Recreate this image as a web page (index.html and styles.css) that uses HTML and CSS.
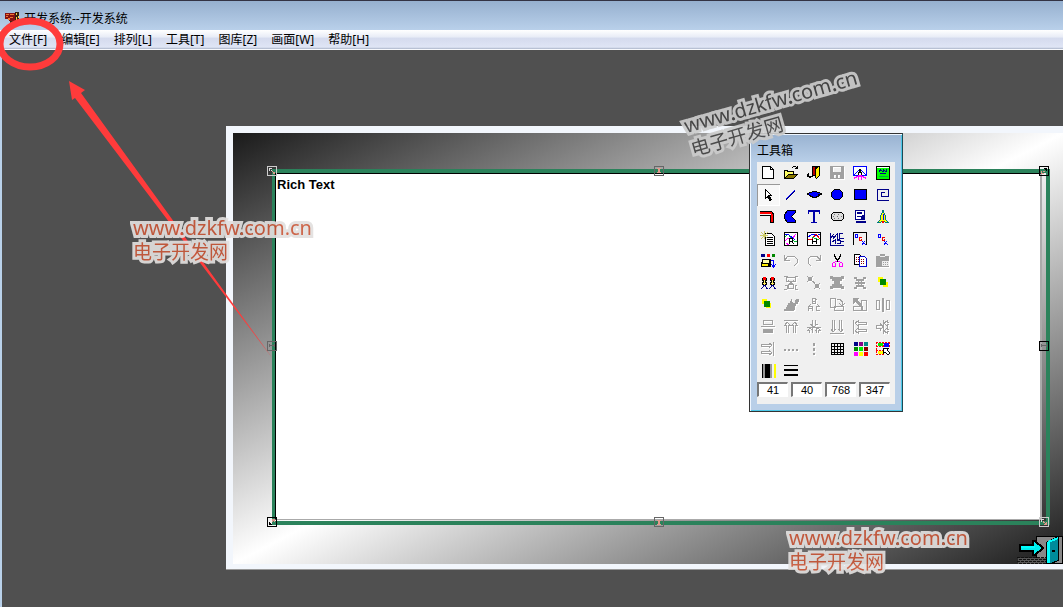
FILE: index.html
```html
<!DOCTYPE html>
<html lang="zh-CN">
<head>
<meta charset="utf-8">
<title>开发系统</title>
<link rel="stylesheet" href="styles.css">
</head>
<body>
<div class="app">
  <header class="titlebar">
    <svg class="app-icon" viewBox="0 0 14 14"><path fill="#811" d="M0 1h10v8H4V7H0z"/><path fill="#e73" d="M1 2h3v1H1zM5 2h4v1H5zM1 4h2v1H1zM5 5h3v1H5zM3 6h2v2H3z"/><path fill="#321" d="M10 0h4v11h-2v2H7v-2H5V9h5z"/><path fill="#fc4" d="M11 1h1v2h-1zM11 5h1v3h-1zM7 10h3v1H7zM13 4h1v2h-1z"/></svg>
    <h1 class="title">开发系统--开发系统</h1>
  </header>
  <nav class="menubar">
    <button class="menu">文件[F]</button>
    <button class="menu">编辑[E]</button>
    <button class="menu">排列[L]</button>
    <button class="menu">工具[T]</button>
    <button class="menu">图库[Z]</button>
    <button class="menu">画面[W]</button>
    <button class="menu">帮助[H]</button>
  </nav>
  <main class="workspace">
    <section class="screen">
      <div class="screen-body">
        <div class="object">
          <textarea class="rich" aria-label="Rich Text">Rich Text</textarea>
          <svg class="handle nw light" viewBox="0 0 10 10"><path class="box" d="M.5 .5h9v9h-9z"/><path d="M2 2h3v1H3v2H2zM4 4h1v1H4z"/><path class="pink" d="M5 5h1v1H5zM6 6h2v2H6z"/></svg>
          <svg class="handle n grey" viewBox="0 0 10 10"><path class="box" d="M.5 .5h9v9h-9z"/><path class="pink" d="M3 2h4v1H6v3h1v1H3V6h1V3H3z"/></svg>
          <svg class="handle ne" viewBox="0 0 10 10"><path class="box" d="M.5 .5h9v9h-9z"/><path d="M5 2h3v3H7V4H6V3H5z"/><path class="pink" d="M2 5h1v2h2v1H2zM4 5h2v1H4z"/></svg>
          <svg class="handle w grey" viewBox="0 0 10 10"><path class="box" d="M.5 .5h9v9h-9z"/><path d="M2 3h1v1h4V3h1v3H7V5H3v1H2z"/></svg>
          <svg class="handle e" viewBox="0 0 10 10"><path class="box" d="M.5 .5h9v9h-9z"/><path fill="#666" d="M2 3h1v1h4V3h1v3H7V5H3v1H2z"/></svg>
          <svg class="handle sw" viewBox="0 0 10 10"><path class="box" d="M.5 .5h9v9h-9z"/><path d="M2 5h1v1h1v1h1v1H2z"/><path class="pink" d="M5 2h3v3H7V4H6v1H5z"/></svg>
          <svg class="handle s grey" viewBox="0 0 10 10"><path class="box" d="M.5 .5h9v9h-9z"/><path class="pink" d="M3 3h4v1H6v3h1v1H3V7h1V4H3z"/></svg>
          <svg class="handle se light" viewBox="0 0 10 10"><path class="box" d="M.5 .5h9v9h-9z"/><path d="M2 2h3v1H3v2H2z"/><path class="pink" d="M4 4h1v1h1v1h1V5h1v3H5V7h1V6H4z"/></svg>
        </div>
        <svg class="door" viewBox="0 0 46 29"><path fill="#888" stroke="#000" d="M19.500 1.500h26v27h-26z"/><path fill="#555" d="M1 23h28v6H1z"/><path fill="none" stroke="#111" stroke-dasharray="3 1" d="M0 22.500h29M2 24.500h27M0 26.500h29M2 28.500h27"/><path fill="#0ee" stroke="#000" stroke-width="2" d="M3 10h13V6h2l8 7-8 7h-2v-4H3z"/><path fill="#0ff" d="M4 11h14v2H4z"/><path fill="#008b9b" stroke="#000" d="M29.500 7.500l12-6v24l-8 3h-4z"/><path fill="#0ff" d="M30 7h3v21h-3zM31 6l10-4v2l-9 4z"/><path d="M35 15h3v2h-3z"/></svg>
      </div>
    </section>

    <section class="toolbox">
      <h2 class="title toolbox-title">工具箱</h2>
      <div class="panel">
        <div class="tools">
          <button class="tool" aria-label="New"><svg viewBox="0 0 16 16"><path fill="#fff" stroke="#000" d="M2.500 1.500h8l3 3v9h-11z"/><path d="M10 1h1v3h3v1h-4z"/></svg></button>
          <button class="tool" aria-label="Open"><svg viewBox="0 0 16 16"><path d="M1 5h4v1h6v3h4l-4 5H1z"/><path fill="#ff6" d="M2 6h2v1h6v2H5l-3 4z"/><path fill="#870" d="M5 10h8l-3 3H3z"/><path d="M9 2h1V1h3v1h1V1h1v3h-3V3h1V2h-3v1H9z"/></svg></button>
          <button class="tool" aria-label="Exit"><svg viewBox="0 0 16 16"><path d="M6 1h8v9l-4 4-1-3H6z"/><path fill="#b00" d="M7 2h2v8H7z"/><path fill="#fe0" d="M10 4l3-2v8l-3 3z"/><path d="M2 8h1v3h3v-1h1v2H5v1H3v-1H1V9h1z"/></svg></button>
          <button class="tool off" aria-label="Save"><svg viewBox="0 0 16 16"><path fill-rule="evenodd" d="M1 1h14v13H1zM4 2v5h8V2zM5 10v3h2v-3zM9 10v3h2v-3z"/></svg></button>
          <button class="tool" aria-label="Screen"><svg viewBox="0 0 16 16"><path fill="#fff" stroke="#00f" d="M1.500 1.500h13v9h-13z"/><path class="line blue" d="M2 10l5-5M14 10L9 5"/><path d="M7 4h2v3h1v3H9V8H7v2H6V7h1z"/><path fill="#f0f" d="M6 10h4v1h2v1h2v2h-1v-1h-2v-1h-1v3H9v-3H7v3H6v-3H5v1H3v1H2v-2h2v-1h2z"/></svg></button>
          <button class="tool" aria-label="Picture"><svg viewBox="0 0 16 16"><path fill="#0f0" stroke="#000" d="M1.500 1.500h13v13h-13z"/><path fill="#008" d="M4 5h1V4h1v1h1v1h1V4h1v1h1v1h1V4h1v3h-2V6H9v1H7V6H5v1H4zM5 8h6v1H5z"/><path fill="#fff" d="M2 2h12v1H2z"/><path fill="#0a4" d="M4 11h9v1H4z"/></svg></button>

          <button class="tool on" aria-label="Select"><svg viewBox="0 0 16 16"><path fill="#fff" stroke="#000" d="M5.500 2.500l6 6H9l2 4-1 1-2-4-2.500 2z"/></svg></button>
          <button class="tool smooth" aria-label="Line"><svg viewBox="0 0 16 16"><path stroke="#00f" stroke-width="1" d="M3 12l9-9"/><path stroke="#006" d="M3 13l9-9"/></svg></button>
          <button class="tool" aria-label="Arc"><svg viewBox="0 0 16 16"><path fill="#000" d="M6 4h5v1h3v1h2v2h-2v1h-1v1h-2v1H6v-1H4V9H3V8H1V6h2V5h3z"/><path fill="#00f" d="M6 5h5v1h3v1h-2v2h-2v1H7V9H5V8H3V6h3z"/></svg></button>
          <button class="tool" aria-label="Ellipse"><svg viewBox="0 0 16 16"><path class="fill" d="M5.500 2.500h5l3 3v4l-3 3h-5l-3-3v-4z"/></svg></button>
          <button class="tool" aria-label="Rectangle"><svg viewBox="0 0 16 16"><path class="fill" d="M2.500 2.500h12v10h-12z"/></svg></button>
          <button class="tool" aria-label="Polyline"><svg viewBox="0 0 16 16"><path class="line navy" d="M14 2.500H2.500v11H14M13.500 2v7h-7V5.500H10"/></svg></button>

          <button class="tool" aria-label="Pipe"><svg viewBox="0 0 16 16"><path class="line" d="M0 2.500h11l2 2v9h-3v-7H0"/><path stroke="red" stroke-width="2" fill="none" d="M0 4h11l1 2v7"/></svg></button>
          <button class="tool" aria-label="Polygon"><svg viewBox="0 0 16 16"><path class="fill" d="M4.500 1.500h8v2l-4 4 4 4v2h-8l-3-4v-4z"/></svg></button>
          <button class="tool" aria-label="Text"><svg viewBox="0 0 16 16"><path fill="#00a" d="M2 1h12v4h-1V3H9v10h2v1H5v-1h2V3H3v2H2z"/></svg></button>
          <button class="tool" aria-label="Button"><svg viewBox="0 0 16 16"><path fill="#ddd" stroke="#000" d="M4.500 3.500h8l2 2v4l-2 2h-8l-2-2v-4z"/><path stroke="#777" stroke-dasharray="1 3" d="M5 5.500h8M4 7.500h9M5 9.500h7"/></svg></button>
          <button class="tool" aria-label="Menu"><svg viewBox="0 0 16 16"><path fill="#fff" stroke="#008" d="M3.500 1.500h9v9h-9z"/><path fill="#008" d="M5 3h5v2H5zM5 7h6v1H5zM10 6h3v4H9zM4 12h10v2H4z"/></svg></button>
          <button class="tool" aria-label="Alarm"><svg viewBox="0 0 16 16"><path fill="#ff0" stroke="#007c7c" d="M7.500 1.500h1v2l2 3v4l3 3h-3l-1-1h-3l-1 1h-3l3-3v-4l2-3z"/><path class="line blue" d="M8.500 5v6"/><path fill="red" d="M7 12h2v2H7z"/></svg></button>

          <button class="tool" aria-label="Report"><svg viewBox="0 0 16 16"><path fill="#fff" stroke="#000" d="M5.500 2.500h6l3 3v9h-9z"/><path d="M7 6h6v1H7zM7 8h6v1H7zM7 10h6v1H7zM7 12h6v1H7z"/><path stroke="#cc6" d="M1 1l6 6M8 1L1 8M0 4.500h8M4.500 0v8"/></svg></button>
          <button class="tool" aria-label="Real-time trend"><svg viewBox="0 0 16 16"><path class="page" d="M1.500 1.500h13v13h-13z"/><path class="line green" d="M2 6l3-3 6 7 3 1"/><path class="line pink" d="M2 10l3-3 4 1 4-5M3 12l3 2"/><path class="line blue" d="M2 3l4 1 6 5"/><path class="line" d="M6.500 13V7.500h3v3H7M9 11l2 2"/></svg></button>
          <button class="tool" aria-label="History trend"><svg viewBox="0 0 16 16"><path class="page" d="M1.500 1.500h13v13h-13z"/><path class="line blue" d="M2 6l5-3 3 2 4-2"/><path class="line red" d="M2 8h4l4-5 4 5"/><path class="line green" d="M6 6l7 3"/><path class="line" d="M6.500 8v5M10.500 8v5M6 10.500h5"/></svg></button>
          <button class="tool" aria-label="XY chart"><svg viewBox="0 0 16 16"><path class="line navy" d="M1.500 2v12h13M2 7l3-4M4 5v3M5 7l3-4v5h3M10 2.500h4M10.500 3v4h4M3 11l3-2v4M8 9.500h3v3H8M12 10.500h3"/></svg></button>
          <button class="tool" aria-label="Formula"><svg viewBox="0 0 16 16"><path class="line" d="M1.500 14V1.500h13V14"/><path class="line blue" d="M3.500 3.500h2v3h-2zM10 10l4 4M13 10l-3 4"/><path class="line red" d="M9.500 6.500h-2v3h2V8"/></svg></button>
          <button class="tool" aria-label="Value"><svg viewBox="0 0 16 16"><path class="line blue" d="M3.500 3.500h2v3h-2zM9 10l4 4M12 10l-3 4"/><path class="line red" d="M9.500 6.500h-2v3h2V8"/></svg></button>

          <button class="tool" aria-label="Control"><svg viewBox="0 0 16 16"><path fill="#008" d="M1 1h4v3H1z"/><path fill="red" d="M7 1h3v3H7z"/><path fill="#080" d="M12 1h3v3h-3z"/><path d="M2 6h9v8H1V9h1z"/><path fill="#ffa" d="M3 7h6v3H3z"/><path fill="#fe0" d="M2 11h6v2H2z"/><path class="line blue" d="M11 7.500h2.500V13M11 11l2.500 3 2.500-3"/></svg></button>
          <button class="tool off" aria-label="Undo"><svg viewBox="0 0 16 16"><path class="line" d="M1.500 2v5h5M2 7l3-4h6l3 3v4l-3 3"/></svg></button>
          <button class="tool off" aria-label="Redo"><svg viewBox="0 0 16 16"><path class="line" d="M14.500 2v5h-5M14 7l-3-4H5L2 6v4l3 3"/></svg></button>
          <button class="tool" aria-label="Cut"><svg viewBox="0 0 16 16"><path d="M5 1h1v2h1v2h1v1h1V5h1V3h1V1h1v3h-1v2h-1v1H9v2H8V7H7V6H6V4H5z"/><path fill="none" stroke="#f0f" d="M8 8.500H6.500L3.500 10.500v3h3v-4M9 8.500h1.500l3 2v3h-3v-4"/></svg></button>
          <button class="tool" aria-label="Copy"><svg viewBox="0 0 16 16"><path class="page" d="M2.500 1.500h5l2 2v8h-7z"/><path fill="#fff" stroke="#00c" d="M7.500 3.500h5l2 2v8h-7z"/><path stroke="#800" stroke-dasharray="1 1" d="M4 4.500h3M4 6.500h3M4 8.500h3M9 6.500h4M9 8.500h4M9 10.500h4"/></svg></button>
          <button class="tool off" aria-label="Paste"><svg viewBox="0 0 16 16"><path d="M1 3h4V1h5v2h4v11H1z"/><path fill="#eee" d="M5 3h5v1H5zM7 8h7v5H7z"/><path d="M8 9h1v1H8zM10 9h1v1h-1zM12 9h1v1h-1zM8 11h1v1H8zM10 11h1v1h-1zM12 11h1v1h-1z"/></svg></button>

          <button class="tool" aria-label="Duplicate"><svg viewBox="0 0 16 16"><path fill="#fe6" stroke="#000" d="M3.500 2.500h2l1 2-1 2 1 2-1 2h-2l-1-2 1-2-1-2zM11.500 2.500h2l1 2-1 2 1 2-1 2h-2l-1-2 1-2-1-2z"/><path fill="red" d="M3 2h3v3H3zM11 2h3v3h-3z"/><path class="line navy" d="M4.500 10l-3 4M4.500 10l3 4M12.500 10l-3 4M12.500 10l3 4"/></svg></button>
          <button class="tool off" aria-label="Compose cell"><svg viewBox="0 0 16 16"><path class="line" d="M1 1.500h3v1h8v-1h3M3.500 2v4h3M12.500 2v4h-3M5 5l6 5M11 5l-6 5M5.500 9.500h5v4h-5zM2 10.500h2v3M14 10.500h-2v3M1 14.500h3M12 14.500h3"/></svg></button>
          <button class="tool off" aria-label="Split cell"><svg viewBox="0 0 16 16"><path class="line" d="M1 1l6 6M7 1L1 7M2.500 2.500h3v3h-3zM8 8l6 6M14 8l-6 6M9.500 9.500h3v3h-3zM7 6l2 3"/></svg></button>
          <button class="tool off" aria-label="Group"><svg viewBox="0 0 16 16"><path d="M1 1h3v1h8V1h3v3h-2v2h-2v3h2v2h2v3h-3v-1H4v1H1v-3h2V9h2V6H3V4H1z"/></svg></button>
          <button class="tool off" aria-label="Ungroup"><svg viewBox="0 0 16 16"><path d="M2 2h3v2h6V2h3v2h-2v2h-2v1h3v2h-3v1h2v2h2v2h-3v-2H5v2H2v-2h2v-2h2V9H3V7h3V6H4V4H2z"/><path fill="#f0f0f0" d="M7 6h2v1H7zM7 9h2v1H7z"/></svg></button>
          <button class="tool" aria-label="To front"><svg viewBox="0 0 16 16"><path fill="#ff0" d="M3 2h5v5H3zM8 7h5v5H8z"/><path fill="#080" d="M5 4h6v6H5z"/></svg></button>

          <button class="tool" aria-label="To back"><svg viewBox="0 0 16 16"><path fill="#ff0" d="M2 2h5v5H2zM6 6h5v5H6z"/><path fill="#080" d="M4 4h6v6H4z"/></svg></button>
          <button class="tool off" aria-label="Rotate"><svg viewBox="0 0 16 16"><path d="M1 12h2v-2h1V8h1V6h2V4h1V2h1v3h1v1h2V3h1V2h3v3h-1v2h-2v2h-1v4h-1v1H1z"/></svg></button>
          <button class="tool off" aria-label="Order"><svg viewBox="0 0 16 16"><path class="line" d="M6.500 1v6M6 1.500h3l1 1-1 1.500H7M9 4l1 2-1 .500H7M2.500 14v-4l1-.500h2l1 .500v4M2 11.500h5M14 9.500h-4v4h4M5 7L3 9M11 7l2 2"/></svg></button>
          <button class="tool off" aria-label="Rotate right"><svg viewBox="0 0 16 16"><path class="line" d="M1.500 1.500h5v9h-5zM5.500 9.500h9v4h-9zM8 2.500h3l2 2v4M10 6l3 3 3-3"/></svg></button>
          <button class="tool off" aria-label="Rotate left"><svg viewBox="0 0 16 16"><path class="line" d="M9.500 3.500h5v10h-5zM1.500 9.500h9v4h-9z"/><path d="M1 1h6L5 3l5 5-2 2-5-5-2 2z"/></svg></button>
          <button class="tool off" aria-label="Mirror"><svg viewBox="0 0 16 16"><path class="line" d="M1.500 3.500h3v9h-3zM11.500 3.500h3v9h-3z"/><path d="M7 1h2v14H7z"/></svg></button>

          <button class="tool off" aria-label="Flip"><svg viewBox="0 0 16 16"><path class="line" d="M3.500 1.500h9v4h-9zM1 7.500h14"/><path d="M3 10h10v4H3z"/></svg></button>
          <button class="tool off" aria-label="Align top"><svg viewBox="0 0 16 16"><path class="line" d="M1 1.500h14M3.500 14V6H2l2-3 3 3H5.500v8M10.500 14V6H9l3-3 2 3h-1.500v8"/></svg></button>
          <button class="tool off" aria-label="Align middle"><svg viewBox="0 0 16 16"><path class="line" d="M6.500 1v4h-2l3 3 4-3h-2V1M1 8.500h14M3.500 14v-3H2l2-2 3 3M9 12l3-3 2 2h-1.500v3M6 14V9M10 14V9"/></svg></button>
          <button class="tool off" aria-label="Align bottom"><svg viewBox="0 0 16 16"><path class="line" d="M1 14.500h14M3.500 1v9H2l2 3 3-3H5.500V1M10.500 1v9H9l3 3 2-3h-1.500V1"/></svg></button>
          <button class="tool off" aria-label="Align left"><svg viewBox="0 0 16 16"><path class="line" d="M1.500 1v14M14 3.500H6V2L3 4l3 3V5.500h8zM14 10.500H6V9l-3 3 3 2v-1.500h8z"/></svg></button>
          <button class="tool off" aria-label="Align centre"><svg viewBox="0 0 16 16"><path class="line" d="M8.500 1v14M1 6.500h4v-2l3 3-3 4v-2H1zM14 3.500h-2V2L9 4l3 3V5.500h2M14 10.500h-2V9l-3 3 3 2v-1.500h2"/></svg></button>

          <button class="tool off" aria-label="Align right"><svg viewBox="0 0 16 16"><path class="line" d="M13.500 1v14M1 3.500h8V2l3 2-3 3V5.500H1zM1 10.500h8V9l3 3-3 2v-1.500H1z"/></svg></button>
          <button class="tool off" aria-label="Space horizontally"><svg viewBox="0 0 16 16"><path d="M1 8h2v2H1zM5 8h2v2H5zM9 8h2v2H9zM13 8h2v2h-2z"/></svg></button>
          <button class="tool off" aria-label="Space vertically"><svg viewBox="0 0 16 16"><path d="M7 2h2v3H7zM7 7h2v3H7zM7 12h2v2H7z"/></svg></button>
          <button class="tool" aria-label="Grid"><svg viewBox="0 0 16 16"><path class="line" d="M2 2.500h13M2 5.500h13M2 8.500h13M2 11.500h13M2.500 2v12M5.500 2v12M8.500 2v12M11.500 2v12M14.500 2v12M2 13.500h13"/></svg></button>
          <button class="tool" aria-label="Palette"><svg viewBox="0 0 16 16"><path fill="#008" d="M2 1h4v4H2z"/><path fill="#808" d="M7 1h4v4H7z"/><path fill="#088" d="M12 1h4v4h-4z"/><path fill="#080" d="M2 6h4v4H2z"/><path fill="#0e0" d="M7 6h4v4H7z"/><path fill="#800" d="M12 6h4v4h-4z"/><path fill="#f0f" d="M2 11h4v4H2z"/><path fill="#ff0" d="M7 11h4v4H7z"/><path fill="red" d="M12 11h4v4h-4z"/></svg></button>
          <button class="tool" aria-label="Pick object"><svg viewBox="0 0 16 16"><path fill="none" stroke="red" stroke-dasharray="2 1" d="M1 1.500h14M1 5.500h14M1 9.500h7M1 13.500h8M1.500 1v13M8.500 1v5M14.500 1v5"/><path fill="#0e0" d="M3 2h5v3H3z"/><path fill="#00f" d="M9 2h5v4H9z"/><path fill="#ff0" d="M3 10h5v3H3z"/><path fill="#fff" stroke="#000" d="M8.500 7.500h5l-1.500 1.500 3 3-2 2-3-3-1.500 1.500z"/></svg></button>

          <button class="tool" aria-label="Fill"><svg viewBox="0 0 16 16"><path fill="#999" d="M2 1h10v14H2z"/><path d="M2 1h1v14H2zM5 1h5v14H5z"/><path fill="#ff0" d="M14 1h2v14h-2z"/></svg></button>
          <button class="tool" aria-label="Line width"><svg viewBox="0 0 16 16"><path d="M1 2h14v1H1zM1 6h14v2H1zM1 11h14v2H1z"/></svg></button>
        </div>
        <div class="fields">
          <input class="field" aria-label="X" value="41">
          <input class="field" aria-label="Y" value="40">
          <input class="field" aria-label="Width" value="768">
          <input class="field" aria-label="Height" value="347">
        </div>
      </div>
    </section>
  </main>

  <svg class="arrow" viewBox="0 0 280 370"><ellipse cx="30" cy="44" rx="30" ry="23"/><path d="M69 81l16 9-4 3 192 266L75 98l-3 2z"/></svg>
  <p class="mark mark-left">www.dzkfw.com.cn<br><span class="mark-cn">电子开发网</span></p>
  <p class="mark mark-tilt">www.dzkfw.com.cn<br><span class="mark-cn">电子开发网</span></p>
  <p class="mark mark-bottom">www.dzkfw.com.cn<br><span class="mark-cn">电子开发网</span></p>
</div>
</body>
</html>
```
FILE: styles.css
```css
* { box-sizing: border-box; }
body {
  margin: 0;
  font: 12px/16px "Noto Sans", "Noto Sans CJK SC", sans-serif;
  color: #000;
}
button, input, textarea { font: inherit; color: inherit; }
.app {
  position: relative;
  display: flex;
  flex-direction: column;
  min-height: 100vh;
  overflow: hidden;
  background: #505050;
}

.titlebar {
  display: flex;
  align-items: center;
  gap: 5px;
  height: 30px;
  padding: 6px 5px 0;
  border-top: 1px solid #334;
  background: linear-gradient(#96b0cf, #b9d0ea);
}
.app-icon { width: 14px; height: 14px; }
.title { margin: 0; font-size: 12px; font-weight: normal; }
.menubar {
  display: flex;
  gap: 14px;
  height: 20px;
  padding: 0 9px;
  border-bottom: 1px solid #f6f8fc;
  background: linear-gradient(#fff, #e9edf7 35%, #d5dbee 45%, #dfe5f5 90%, #aab4c8);
}
.menu { padding: 0; border: 0; background: none; white-space: nowrap; }

.workspace {
  position: relative;
  flex: 1;
  border-left: 2px solid #b9d1ea;
}
.screen {
  position: absolute;
  inset: 76px 0 37px 224px;
  display: flex;
  padding: 7px 0 5px 7px;
  background: #f2f6fc;
  border-bottom: 1px solid #999;
}
.screen-body {
  position: relative;
  flex: 1;
  display: flex;
  padding: 36px 13px 39px 39px;
  background: linear-gradient(to bottom right, #1a1a1a, #fff 50%, #1a1a1a);
}
.object {
  position: relative;
  flex: 1;
  display: flex;
  padding: 0 4px 1px 0;
  border: 4px solid #2b825b;
  border-left-width: 3px;
}
.rich {
  flex: 1;
  margin: 0;
  padding: 2px 1px;
  border: 1px solid #000;
  border-right: 2px solid #aaa;
  border-bottom: 1px solid #aaa;
  outline: 0;
  background: #fff;
  font: bold 13px/18px "Liberation Sans", sans-serif;
  resize: none;
}
.handle { position: absolute; width: 10px; height: 10px; shape-rendering: crispEdges; }
.handle .box { fill: none; stroke: #000; }
.handle .pink { fill: #e09a8c; }
.handle.light { fill: #ddd; }
.handle.light .box { stroke: #ccc; }
.handle.grey { fill: #666; }
.handle.grey .box { stroke: #666; }
.nw, .n, .ne { top: -7px; }
.sw, .s, .se { bottom: -6px; }
.w, .e { top: calc(50% - 6px); }
.nw, .w, .sw { left: -8px; }
.ne, .e, .se { right: -3px; }
.n, .s { left: calc(50% - 7px); }
.door { position: absolute; right: 0; bottom: 0; width: 46px; height: 29px; shape-rendering: crispEdges; }

.toolbox {
  position: absolute;
  top: 83px;
  left: 747px;
  padding: 9px 7px 7px;
  border: 1px solid #333;
  border-right-color: #1c4a55;
  background: linear-gradient(#98b2d1, #b9cfe8 28px);
  box-shadow: inset 1px 1px #eef6ff, inset -1px -1px #4cc8e8;
}
.toolbox-title { padding-bottom: 3px; }
.panel { background: #f0f0f0; padding-bottom: 7px; }
.tools { display: grid; grid-template-columns: repeat(6, 23px); grid-auto-rows: 22px; }
.tool { display: flex; padding: 3px; border: 0; background: none; }
.tool svg { width: 16px; height: 16px; shape-rendering: crispEdges; }
.tool.smooth svg { shape-rendering: auto; }
.tool.on { background: #f8f8f8; box-shadow: inset 1px 1px #999, inset -1px -1px #fff; }
.tool.off svg { fill: #a0a0a0; filter: drop-shadow(1px 1px 0 #fff); }
.line { fill: none; stroke: #000; }
.off .line { stroke: #a0a0a0; }
.line.blue { stroke: #00f; }
.line.navy { stroke: #008; }
.line.green { stroke: #0b3; }
.line.red { stroke: #e00; }
.line.pink { stroke: #f0f; }
.fill { fill: #00f; stroke: #000; }
.page { fill: #fff; stroke: #000; }
.fields { display: flex; gap: 3px; }
.field {
  width: 31px;
  height: 15px;
  padding: 0;
  border: 1px solid #fff;
  border-top: 2px solid #777;
  border-left: 2px solid #777;
  background: #fff;
  font: 11px/12px "Liberation Sans", sans-serif;
  text-align: center;
}

.arrow { position: absolute; top: 0; left: 0; width: 280px; height: 370px; fill: #ff3b3b; pointer-events: none; }
.arrow ellipse { fill: none; stroke: #ff3b3b; stroke-width: 7px; }
.mark {
  position: absolute;
  margin: 0;
  font-size: 20px;
  line-height: 24px;
  color: #c9583a;
  white-space: nowrap;
  -webkit-text-stroke: 6px #e2e0df;
  paint-order: stroke fill;
  opacity: 0.92;
  pointer-events: none;
}
.mark-cn { font-size: 19px; }
.mark-left { top: 216px; left: 133px; }
.mark-bottom { top: 526px; left: 789px; }
.mark-tilt { top: 114px; left: 688px; color: #444; -webkit-text-stroke-color: #ccc; transform: rotate(-16deg); transform-origin: 0 50%; }
```
